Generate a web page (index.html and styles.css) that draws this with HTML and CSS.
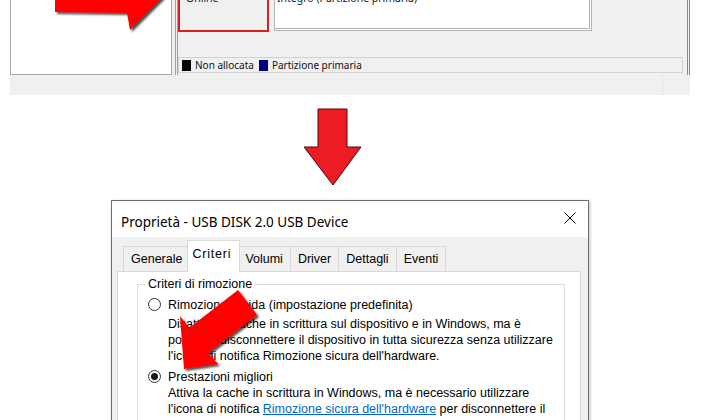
FILE: index.html
```html
<!DOCTYPE html>
<html lang="it">
<head>
    <meta charset="UTF-8">
    <meta name="viewport" content="width=device-width, initial-scale=1.0">
    <title>Proprietà - USB DISK 2.0 USB Device</title>
    <link rel="stylesheet" href="styles.css">
</head>
<body>
<div class="page">

    <!-- ritaglio di Gestione disco -->
    <div class="dm">
        <div class="dm-row">
            <div class="dm-list"></div>
            <div class="dm-graph">
                <div class="dm-parts">
                    <div class="dm-status"><span>Online</span></div>
                    <div class="dm-part"><span>Integro (Partizione primaria)</span></div>
                </div>
                <div class="dm-legend">
                    <span class="sw sw-black"></span>Non allocata
                    <span class="sw sw-navy"></span>Partizione primaria
                </div>
            </div>
        </div>
        <div class="dm-foot"></div>
    </div>

    <svg class="arrow-top" width="140" height="40" viewBox="40 0 140 40">
        <defs>
            <filter id="ombra" x="-20%" y="-20%" width="140%" height="140%">
                <feDropShadow dx="2" dy="2" stdDeviation="1" flood-color="#000" flood-opacity="0.7"/>
            </filter>
        </defs>
        <polygon points="55,-40 55,12 127,13 130,30 166,-6 120,-50" fill="#ff0000" filter="url(#ombra)"/>
    </svg>

    <!-- freccia verso il basso -->
    <div class="step">
        <svg class="arrow-down" width="60" height="80" viewBox="0 0 60 80">
            <polygon points="15,1 44,1 44,39 58,39 30,77 1,39 15,39" fill="#ed1c24" stroke="#4a0a0a" stroke-width="1"/>
        </svg>
    </div>

    <!-- finestra proprietà -->
    <div class="dlg">
        <div class="dlg-title">
            <span>Proprietà - USB DISK 2.0 USB Device</span>
            <svg class="close" width="12" height="12" viewBox="0 0 12 12">
                <path d="M0.5 0.5 L11.5 11.5 M11.5 0.5 L0.5 11.5" stroke="#000" stroke-width="1"/>
            </svg>
        </div>
        <div class="dlg-body">
            <div class="tabs">
                <div class="tab">Generale</div>
                <div class="tab on">Criteri</div>
                <div class="tab">Volumi</div>
                <div class="tab">Driver</div>
                <div class="tab">Dettagli</div>
                <div class="tab">Eventi</div>
            </div>
            <div class="panel">
                <fieldset>
                    <legend>Criteri di rimozione</legend>
                    <div class="opt">
                        <span class="radio"></span>Rimozione rapida (impostazione predefinita)
                    </div>
                    <div class="desc">
                        Disattiva la cache in scrittura sul dispositivo e in Windows, ma è<br>
                        possibile disconnettere il dispositivo in tutta sicurezza senza utilizzare<br>
                        l'icona di notifica Rimozione sicura dell'hardware.
                    </div>
                    <div class="opt">
                        <span class="radio on"></span>Prestazioni migliori
                    </div>
                    <div class="desc desc-2">
                        Attiva la cache in scrittura in Windows, ma è necessario utilizzare<br>
                        l'icona di notifica <a href="#">Rimozione sicura dell'hardware</a> per disconnettere il<br>
                        dispositivo in modo sicuro.
                    </div>
                </fieldset>
            </div>
        </div>
    </div>

    <svg class="arrow-diag" width="150" height="110" viewBox="150 270 150 110">
        <polygon points="184,369 180,316 189,328 238,290 257,315 208,353 218,364" fill="#ff0000" filter="url(#ombra)"/>
    </svg>

</div>
</body>
</html>
```

FILE: styles.css
```css
* {
    box-sizing: border-box;
}
body {
    margin: 0;
    background: #fff;
    font-family: "Liberation Sans", Arial, sans-serif;
    color: #000;
}
.page {
    position: relative;
    width: 703px;
    height: 420px;
    overflow: hidden;
}

/* Gestione disco */
.dm {
    margin-left: 10px;
    width: 680px;
    height: 95px;
    background: #f0f0f0;
    font-family: "Noto Sans", sans-serif;
    font-size: 10px;
}
.dm-row {
    display: flex;
    height: 75px;
}
.dm-list {
    width: 162px;
    background: #fff;
    border: 1px solid #a8a8a8;
    border-top: 0;
}
.dm-graph {
    margin-left: 3px;
    width: 515px;
    border-left: 3px double #a0a0a0;
    border-right: 3px double #8a8a8a;
}
.dm-parts {
    display: flex;
    height: 32px;
}
.dm-status {
    width: 91px;
    border: 2px solid #d42020;
    border-top: 0;
    padding-left: 6px;
    overflow: hidden;
}
.dm-status span,
.dm-part span {
    display: block;
    margin-top: -9px;
    line-height: 14px;
    font-size: 10.5px;
    color: #222;
}
.dm-part {
    margin-left: 5px;
    width: 318px;
    height: 31px;
    background: #fff;
    border-left: 1px solid #b4b4b4;
    border-right: 3px double #b4b4b4;
    border-bottom: 3px double #b4b4b4;
    padding-left: 2px;
    overflow: hidden;
}
.dm-legend {
    display: flex;
    align-items: center;
    margin-top: 25px;
    width: 505px;
    height: 16px;
    border: 1px solid #d2d2d2;
    padding-left: 3px;
    color: #111;
}
.sw {
    display: inline-block;
    width: 9px;
    height: 11px;
    margin-right: 4px;
}
.sw-black {
    background: #000;
}
.sw-navy {
    background: #000080;
    margin-left: 5px;
}
.dm-foot {
    width: 653px;
    height: 20px;
    border-right: 1px solid #e4e4e4;
}

.arrow-top {
    position: absolute;
    left: 40px;
    top: 0;
}
.arrow-diag {
    position: absolute;
    left: 150px;
    top: 270px;
}

/* freccia */
.step {
    height: 105px;
    padding-top: 13px;
}
.arrow-down {
    display: block;
    margin-left: 303px;
}

/* finestra */
.dlg {
    margin-left: 111px;
    width: 478px;
    height: 240px;
    border: 1px solid #6e6e6e;
    background: #f0f0f0;
    box-shadow: 1px 1px 3px rgba(0, 0, 0, 0.25);
}
.dlg-title {
    display: flex;
    align-items: center;
    justify-content: space-between;
    height: 36px;
    padding: 5px 12px 0 9px;
    background: #fff;
    font-family: "Noto Sans", sans-serif;
    font-size: 13.5px;
}
.close {
    margin-top: -8px;
}
.dlg-body {
    padding: 0 7px 0 5px;
    font-size: 12.5px;
}
.tabs {
    display: flex;
    align-items: flex-end;
    height: 34px;
    padding-left: 6px;
}
.tab {
    height: 25px;
    line-height: 24px;
    padding: 0 7px;
    border: 1px solid #d9d9d9;
    border-bottom: 0;
    margin-right: -1px;
}
.tab.on {
    position: relative;
    height: 32px;
    line-height: 27px;
    margin: 0 -3px -1px -2px;
    padding: 0 8px 0 4px;
    background: #fff;
    letter-spacing: 0.8px;
}
.panel {
    height: 170px;
    background: #fff;
    border: 1px solid #d9d9d9;
    padding: 5px 15px 0 19px;
}
fieldset {
    margin: 0;
    height: 200px;
    border: 1px solid #dcdcdc;
    padding: 0 0 0 10px;
}
legend {
    padding: 0 2px;
    margin-left: -2px;
    line-height: 15px;
}
.opt {
    display: flex;
    align-items: center;
    height: 17px;
    margin-top: 4px;
}
.radio {
    display: flex;
    align-items: center;
    justify-content: center;
    width: 13px;
    height: 13px;
    margin-right: 7px;
    border: 1px solid #333;
    border-radius: 50%;
    background: #fff;
}
.radio.on::after {
    content: "";
    width: 7px;
    height: 7px;
    border-radius: 50%;
    background: #1a1a1a;
}
.desc {
    margin: 3px 0 0 20px;
    line-height: 16px;
    white-space: nowrap;
}
.desc-2 {
    margin-top: 0;
}
a {
    color: #0066cc;
}
```
